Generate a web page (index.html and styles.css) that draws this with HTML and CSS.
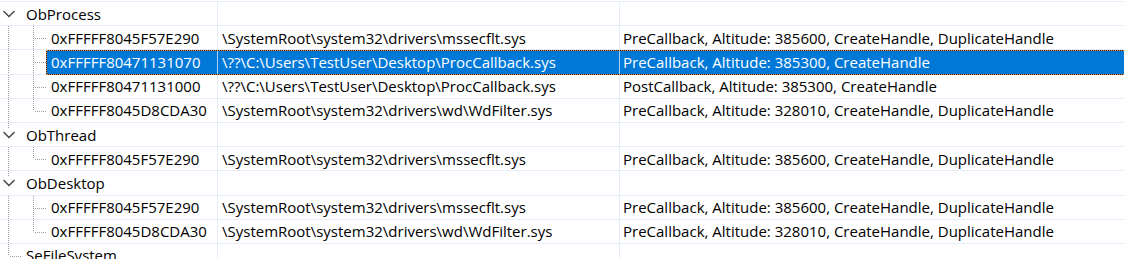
FILE: index.html
```html
<!DOCTYPE html>
<html>
<head>
<meta charset="utf-8">
<link rel="stylesheet" href="styles.css">
</head>
<body>
<div class="tree">
  <div class="row">
    <div class="c c1"><span class="exp"><svg width="21" height="23" viewBox="0 0 21 23"><polyline points="3.5,9 9,14.5 14.5,9" fill="none" stroke="#444" stroke-width="1.4"/></svg></span><span class="lbl">ObProcess</span></div>
    <div class="c c2"></div><div class="c c3"></div>
  </div>
  <div class="row">
    <div class="c c1"><span class="g pass"></span><span class="g tee"></span><span class="lbl">0xFFFFF8045F57E290</span></div>
    <div class="c c2">\SystemRoot\system32\drivers\mssecflt.sys</div>
    <div class="c c3">PreCallback, Altitude: 385600, CreateHandle, DuplicateHandle</div>
  </div>
  <div class="row sel">
    <div class="c c1"><span class="g pass"></span><span class="g tee"></span><span class="lbl">0xFFFFF80471131070</span></div>
    <div class="c c2">\??\C:\Users\TestUser\Desktop\ProcCallback.sys</div>
    <div class="c c3">PreCallback, Altitude: 385300, CreateHandle</div>
  </div>
  <div class="row">
    <div class="c c1"><span class="g pass"></span><span class="g tee"></span><span class="lbl">0xFFFFF80471131000</span></div>
    <div class="c c2">\??\C:\Users\TestUser\Desktop\ProcCallback.sys</div>
    <div class="c c3">PostCallback, Altitude: 385300, CreateHandle</div>
  </div>
  <div class="row">
    <div class="c c1"><span class="g pass"></span><span class="g ell"></span><span class="lbl">0xFFFFF8045D8CDA30</span></div>
    <div class="c c2">\SystemRoot\system32\drivers\wd\WdFilter.sys</div>
    <div class="c c3">PreCallback, Altitude: 328010, CreateHandle, DuplicateHandle</div>
  </div>
  <div class="row">
    <div class="c c1"><span class="exp mid"><svg width="21" height="23" viewBox="0 0 21 23"><polyline points="3.5,9 9,14.5 14.5,9" fill="none" stroke="#444" stroke-width="1.4"/></svg></span><span class="lbl">ObThread</span></div>
    <div class="c c2"></div><div class="c c3"></div>
  </div>
  <div class="row">
    <div class="c c1"><span class="g pass"></span><span class="g ell"></span><span class="lbl">0xFFFFF8045F57E290</span></div>
    <div class="c c2">\SystemRoot\system32\drivers\mssecflt.sys</div>
    <div class="c c3">PreCallback, Altitude: 385600, CreateHandle, DuplicateHandle</div>
  </div>
  <div class="row">
    <div class="c c1"><span class="exp mid"><svg width="21" height="23" viewBox="0 0 21 23"><polyline points="3.5,9 9,14.5 14.5,9" fill="none" stroke="#444" stroke-width="1.4"/></svg></span><span class="lbl">ObDesktop</span></div>
    <div class="c c2"></div><div class="c c3"></div>
  </div>
  <div class="row">
    <div class="c c1"><span class="g pass"></span><span class="g tee"></span><span class="lbl">0xFFFFF8045F57E290</span></div>
    <div class="c c2">\SystemRoot\system32\drivers\mssecflt.sys</div>
    <div class="c c3">PreCallback, Altitude: 385600, CreateHandle, DuplicateHandle</div>
  </div>
  <div class="row">
    <div class="c c1"><span class="g pass"></span><span class="g ell"></span><span class="lbl">0xFFFFF8045D8CDA30</span></div>
    <div class="c c2">\SystemRoot\system32\drivers\wd\WdFilter.sys</div>
    <div class="c c3">PreCallback, Altitude: 328010, CreateHandle, DuplicateHandle</div>
  </div>
  <div class="row">
    <div class="c c1"><span class="g ell"></span><span class="lbl">SeFileSystem</span></div>
    <div class="c c2"></div><div class="c c3"></div>
  </div>
</div>
</body>
</html>
```
FILE: styles.css
```css
:root {
  --grid: #e4edf8;
  --dot: #9c9c9c;
}
html, body {
  margin: 0;
  padding: 0;
  background: #fff;
  overflow: hidden;
}
body {
  font-family: "Open Sans", "Noto Sans", sans-serif;
  font-size: 15px;
  color: #000;
}
.tree {
  margin-top: 1px;
  border-top: 1px solid var(--grid);
}
.row {
  position: relative;
  display: grid;
  grid-template-columns: 218px 402px 1fr;
  height: 24.2px;
  box-sizing: border-box;
  border-bottom: 1px solid var(--grid);
}
.c {
  display: flex;
  align-items: center;
  white-space: nowrap;
  overflow: hidden;
  border-right: 1px solid var(--grid);
  line-height: 22px;
}
.c1 {
  align-items: stretch;
}
.c2 {
  padding-left: 4px;
}
.c3 {
  padding-left: 3px;
  border-right: 0;
}
.lbl {
  flex: 1;
  display: flex;
  align-items: center;
  padding-left: 5px;
}
.g, .exp {
  flex: none;
  width: 21px;
  background-repeat: no-repeat;
}
.exp svg {
  display: block;
}
.exp.mid {
  background-image: repeating-linear-gradient(to bottom, var(--dot) 0 1px, transparent 1px 2px);
  background-position: 8px 0;
  background-size: 1px 5px;
}
.pass {
  width: 25px;
  background-image: repeating-linear-gradient(to bottom, var(--dot) 0 1px, transparent 1px 2px);
  background-position: 8px 0;
  background-size: 1px 100%;
}
.tee {
  background-image:
    repeating-linear-gradient(to bottom, var(--dot) 0 1px, transparent 1px 2px),
    repeating-linear-gradient(to right, var(--dot) 0 1px, transparent 1px 2px);
  background-position: 8px 0, 10px 12px;
  background-size: 1px 100%, 12px 1px;
}
.ell {
  background-image:
    repeating-linear-gradient(to bottom, var(--dot) 0 1px, transparent 1px 2px),
    repeating-linear-gradient(to right, var(--dot) 0 1px, transparent 1px 2px);
  background-position: 8px 0, 10px 12px;
  background-size: 1px 12px, 12px 1px;
}
.sel .lbl, .sel .c2, .sel .c3 {
  background: #0078d7;
  color: #fff;
}
.sel .c1, .sel .c2 {
  border-right-color: #a9cff2;
}
.sel::before, .sel::after {
  content: "";
  position: absolute;
  left: 46px;
  right: -2px;
  top: 0;
  bottom: -1px;
  pointer-events: none;
}
.sel::before {
  border: 1px solid #2b1c0c;
}
.sel::after {
  border: 1px dotted #f08a34;
}
```
